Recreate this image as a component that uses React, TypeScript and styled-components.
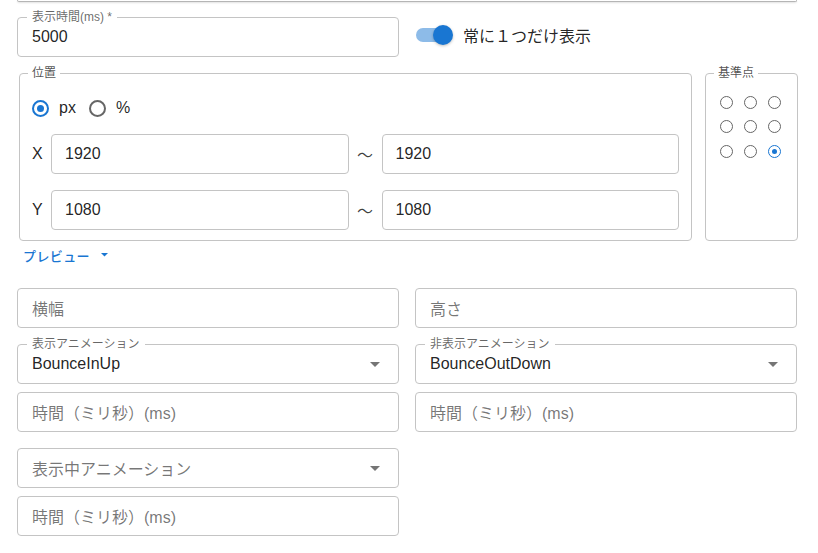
import React from "react";
import styled, { createGlobalStyle } from "styled-components";

const GlobalStyle = createGlobalStyle`
  * { box-sizing: border-box; }
  body {
    margin: 0;
    background: #ffffff;
    font-family: "Liberation Sans", "Noto Sans CJK JP", sans-serif;
    color: rgba(0, 0, 0, 0.87);
  }
`;

const Page = styled.div`
  width: 818px;
  height: 553px;
  overflow: hidden;
  padding: 0 21px 0 17px;
`;

const TopEdge = styled.div`
  height: 2px;
  border: 1px solid #b5b5b5;
  border-top: none;
  border-radius: 0 0 4px 4px;
  box-shadow: 0 1px 2px rgba(0, 0, 0, 0.12);
`;

const TwoCol = styled.div<{ $mt: number; $top?: boolean }>`
  display: grid;
  grid-template-columns: 382px 382px;
  column-gap: 16px;
  margin-top: ${(p) => p.$mt}px;
  align-items: ${(p) => (p.$top ? "start" : "center")};
`;

const Stack = styled.div<{ $gap: number; $mt?: number }>`
  display: flex;
  flex-direction: column;
  gap: ${(p) => p.$gap}px;
  margin-top: ${(p) => p.$mt ?? 0}px;
`;

const Outlined = styled.div<{ $pad?: number }>`
  position: relative;
  height: 40px;
  border: 1px solid #c4c4c4;
  border-radius: 4px;
  display: flex;
  align-items: center;
  padding: 0 ${(p) => p.$pad ?? 14}px;
  font-size: 16px;
  background: #fff;
`;

const FloatLabel = styled.span`
  position: absolute;
  top: -8px;
  left: 9px;
  padding: 0 5px;
  background: #fff;
  font-size: 12px;
  line-height: 14px;
  color: rgba(0, 0, 0, 0.6);
  white-space: nowrap;
`;

const Value = styled.span<{ $muted?: boolean }>`
  color: ${(p) => (p.$muted ? "rgba(0,0,0,0.55)" : "rgba(0,0,0,0.87)")};
  white-space: nowrap;
`;

const Arrow = styled.svg`
  margin-left: auto;
  margin-right: 4px;
  flex: none;
`;

const SwitchLine = styled.label`
  display: flex;
  align-items: center;
  margin-top: -5px;
  padding-left: 1px;
  font-size: 16px;
`;

const Track = styled.span`
  position: relative;
  width: 34px;
  height: 14px;
  border-radius: 7px;
  background: #8dbbe8;
  margin-right: 13px;
`;

const Thumb = styled.span`
  position: absolute;
  top: -3px;
  left: 17px;
  width: 20px;
  height: 20px;
  border-radius: 50%;
  background: #1976d2;
  box-shadow: 0 1px 3px rgba(0, 0, 0, 0.25);
`;

const GroupRow = styled.div`
  display: flex;
  gap: 13px;
  margin: 16px -1px 0 2px;
`;

const Group = styled.div<{ $grow?: boolean }>`
  position: relative;
  height: 168px;
  border: 1px solid #c4c4c4;
  border-radius: 4px;
  ${(p) => (p.$grow ? "flex: 1;" : "width: 93px; flex: none;")}
`;

const GroupLabel = styled.span`
  position: absolute;
  top: -8px;
  left: 8px;
  padding: 0 4px;
  background: #fff;
  font-size: 12px;
  line-height: 14px;
  color: rgba(0, 0, 0, 0.7);
`;

const PositionBody = styled.div`
  padding: 22px 12px 10px 12px;
  display: flex;
  flex-direction: column;
`;

const UnitRow = styled.div`
  display: flex;
  align-items: center;
  height: 24px;
  margin-bottom: 14px;
  font-size: 16px;
`;

const UnitOption = styled.label`
  display: flex;
  align-items: center;
  gap: 10px;
  margin-right: 13px;
`;

const RadioCircle = styled.span<{ $checked?: boolean; $size: number; $stroke: number }>`
  position: relative;
  display: inline-block;
  width: ${(p) => p.$size}px;
  height: ${(p) => p.$size}px;
  border-radius: 50%;
  border: ${(p) => p.$stroke}px solid ${(p) => (p.$checked ? "#1976d2" : "#666")};
  flex: none;
  &::after {
    content: "";
    display: ${(p) => (p.$checked ? "block" : "none")};
    position: absolute;
    inset: ${(p) => Math.round(p.$size * 0.2)}px;
    border-radius: 50%;
    background: #1976d2;
  }
`;

const CoordRows = styled.div`
  display: flex;
  flex-direction: column;
  gap: 16px;
`;

const CoordRow = styled.div`
  display: grid;
  grid-template-columns: 19px 1fr 33px 1fr;
  align-items: center;
  font-size: 16px;
`;

const Tilde = styled.span`
  text-align: center;
  font-size: 16px;
  color: rgba(0, 0, 0, 0.75);
`;

const AnchorGrid = styled.div`
  display: grid;
  grid-template-columns: repeat(3, 24px);
  grid-auto-rows: 24.5px;
  padding: 16px 0 0 8px;
`;

const AnchorCell = styled.span`
  display: flex;
  align-items: center;
  justify-content: center;
`;

const PreviewButton = styled.button`
  display: flex;
  align-items: center;
  gap: 11px;
  margin: 2px 0 0 6px;
  height: 24px;
  padding: 0;
  border: none;
  background: none;
  color: #1976d2;
  font-family: inherit;
  font-size: 13px;
  font-weight: 500;
  letter-spacing: 0.4px;
`;

const Caret = ({ color = "#757575", w = 10 }: { color?: string; w?: number }) => (
  <svg width={w} height={w / 2} viewBox="0 0 10 5">
    <path d="M0 0 L10 0 L5 5 Z" fill={color} />
  </svg>
);

type FieldProps = { label?: string; value?: string; placeholder?: string; select?: boolean };

const Field = ({ label, value, placeholder, select }: FieldProps) => (
  <Outlined>
    {label && <FloatLabel>{label}</FloatLabel>}
    {value ? <Value>{value}</Value> : <Value $muted>{placeholder}</Value>}
    {select && (
      <Arrow width="10" height="5" viewBox="0 0 10 5">
        <path d="M0 0 L10 0 L5 5 Z" fill="#757575" />
      </Arrow>
    )}
  </Outlined>
);

const anchors = [0, 1, 2, 3, 4, 5, 6, 7, 8];

export default function App() {
  return (
    <>
      <GlobalStyle />
      <Page>
        <TopEdge />
        <TwoCol $mt={15}>
          <Field label="表示時間(ms) *" value="5000" />
          <SwitchLine>
            <Track>
              <Thumb />
            </Track>
            常に１つだけ表示
          </SwitchLine>
        </TwoCol>

        <GroupRow>
          <Group $grow>
            <GroupLabel>位置</GroupLabel>
            <PositionBody>
              <UnitRow>
                <UnitOption>
                  <RadioCircle $checked $size={17} $stroke={2} />
                  px
                </UnitOption>
                <UnitOption>
                  <RadioCircle $size={17} $stroke={2} />
                  %
                </UnitOption>
              </UnitRow>
              <CoordRows>
                <CoordRow>
                  <span>X</span>
                  <Outlined $pad={13}>
                    <Value>1920</Value>
                  </Outlined>
                  <Tilde>～</Tilde>
                  <Outlined $pad={13}>
                    <Value>1920</Value>
                  </Outlined>
                </CoordRow>
                <CoordRow>
                  <span>Y</span>
                  <Outlined $pad={13}>
                    <Value>1080</Value>
                  </Outlined>
                  <Tilde>～</Tilde>
                  <Outlined $pad={13}>
                    <Value>1080</Value>
                  </Outlined>
                </CoordRow>
              </CoordRows>
            </PositionBody>
          </Group>
          <Group>
            <GroupLabel>基準点</GroupLabel>
            <AnchorGrid>
              {anchors.map((i) => (
                <AnchorCell key={i}>
                  <RadioCircle $checked={i === 8} $size={13} $stroke={1.5} />
                </AnchorCell>
              ))}
            </AnchorGrid>
          </Group>
        </GroupRow>

        <PreviewButton>
          プレビュー
          <Caret color="#1976d2" w={7} />
        </PreviewButton>

        <TwoCol $mt={21}>
          <Field placeholder="横幅" />
          <Field placeholder="高さ" />
        </TwoCol>

        <TwoCol $mt={16} $top>
          <Stack $gap={8}>
            <Field label="表示アニメーション" value="BounceInUp" select />
            <Field placeholder="時間（ミリ秒）(ms)" />
            <Stack $gap={8} $mt={8}>
              <Field placeholder="表示中アニメーション" select />
              <Field placeholder="時間（ミリ秒）(ms)" />
            </Stack>
          </Stack>
          <Stack $gap={8}>
            <Field label="非表示アニメーション" value="BounceOutDown" select />
            <Field placeholder="時間（ミリ秒）(ms)" />
          </Stack>
        </TwoCol>
      </Page>
    </>
  );
}
